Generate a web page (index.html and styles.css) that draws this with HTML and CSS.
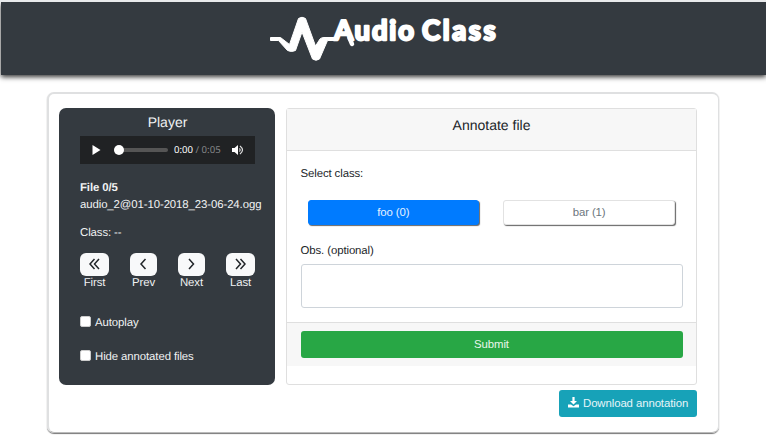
FILE: index.html
```html
<!DOCTYPE html>
<html lang="en">
<head>
<meta charset="utf-8">
<title>Audio Class</title>
<link rel="stylesheet" href="styles.css">
</head>
<body>
<header class="top">
  <svg class="logo" width="240" height="60" viewBox="265 8 240 60" role="img" aria-label="Audio Class">
    <path class="wave" d="M270.500 37.500H280.500L289.500 44.500L298.500 18.500Q302 16 305.500 18.500L315.500 46L320 39Q321.500 37.500 324 37.500H336V40.500H327.500L319.500 59Q316 61.500 312.500 59L302 32L295.500 50.500Q291.500 52.500 287.500 50.500L278.500 40.500H270.500Z"/>
    <path class="tail" d="M349.500 38L352 44"/>
    <text class="name" x="334" y="39.500" textLength="80" lengthAdjust="spacing">Audio</text>
    <text class="name" x="422" y="39.500" textLength="73.500" lengthAdjust="spacing">Class</text>
  </svg>
</header>
<main class="panel">
  <section class="player">
    <h1>Player</h1>
    <div class="audio">
      <svg class="play" width="9" height="10" viewBox="0 0 9 10"><path d="M.5 0L8.500 5L.5 10Z"/></svg>
      <div class="track"><span class="knob"></span></div>
      <div class="time"><b>0:00</b> / 0:05</div>
      <svg class="volume" width="12" height="10" viewBox="0 0 12 10"><path d="M0 3H2.500L6 0V10L2.500 7H0Z"/><path class="sound" d="M7.500 3.300Q9 5 7.500 6.700M8 1Q13 5 8 9"/></svg>
    </div>
    <div class="file"><strong>File 0/5</strong><br>audio_2@01-10-2018_23-06-24.ogg</div>
    <div class="class">Class: --</div>
    <nav class="steps">
      <div class="step"><button class="wide"><svg width="11" height="12" viewBox="0 0 11 12"><path d="M5.500 1L1 6L5.500 11M10 1L5.500 6L10 11"/></svg></button>First</div>
      <div class="step"><button><svg width="11" height="12" viewBox="0 0 11 12"><path d="M7.500 1L3 6L7.500 11"/></svg></button>Prev</div>
      <div class="step"><button><svg width="11" height="12" viewBox="0 0 11 12"><path d="M3 1L7.500 6L3 11"/></svg></button>Next</div>
      <div class="step"><button class="wide"><svg width="11" height="12" viewBox="0 0 11 12"><path d="M1 1L5.500 6L1 11M5.500 1L10 6L5.500 11"/></svg></button>Last</div>
    </nav>
    <label class="check"><input type="checkbox"><span>Autoplay</span></label>
    <label class="check"><input type="checkbox"><span>Hide annotated files</span></label>
  </section>
  <div class="side">
    <section class="card">
      <h2>Annotate file</h2>
      <div class="body">
        <div class="label">Select class:</div>
        <div class="choices"><button class="choice active">foo (0)</button><button class="choice">bar (1)</button></div>
        <label class="label" for="obs">Obs. (optional)</label>
        <textarea id="obs"></textarea>
      </div>
      <footer><button class="submit">Submit</button></footer>
    </section>
    <button class="download"><svg width="11" height="11" viewBox="0 0 11 11"><path d="M4.400 0H6.600V4H9L5.500 7.500L2 4H4.400ZM0 7.500H3L5.500 9.300L8 7.500H11V10.500H0Z"/></svg>Download annotation</button>
  </div>
</main>
</body>
</html>
```
FILE: styles.css
```css
* { box-sizing: border-box; }
body {
  margin: 0;
  height: 437px;
  overflow: hidden;
  background: #fff;
  border-top: 2px solid #e8eaec;
  color: #212529;
  font: 11.4px/17px "Liberation Sans", Arial, sans-serif;
  letter-spacing: -.1px;
  text-rendering: geometricPrecision;
}
button { font: inherit; letter-spacing: inherit; padding: 0; border: 0; display: block; }
h1, h2 { margin: 0; font-size: 14px; font-weight: 400; letter-spacing: 0; text-align: center; }
.top {
  height: 73px;
  margin-left: 1px;
  padding: 6px 0 0 264px;
  background: #343a40;
  box-shadow: 0 2px 5px rgba(0, 0, 0, .8);
}
.logo { display: block; letter-spacing: 0; }
.wave { fill: #fff; stroke: #fff; stroke-width: 1px; stroke-linejoin: round; }
.tail { fill: none; stroke: #fff; stroke-width: 4.5px; stroke-linecap: round; }
.name {
  fill: #fff;
  stroke: #fff;
  stroke-width: 2.4px;
  stroke-linejoin: round;
  font: 700 27.5px Lato, sans-serif;
}
.panel {
  display: flex;
  gap: 11px;
  width: 672px;
  height: 341px;
  margin: 17px 0 0 47px;
  padding: 14px 0 0 10px;
  border: 2px solid #dfe0e1;
  border-right-width: 1px;
  border-bottom: 1px solid #bbb;
  border-radius: 7px;
  box-shadow: 0 1px 1px #777;
}
.player {
  width: 216px;
  height: 277px;
  padding: 5px 20px 0 21px;
  border-radius: 7px;
  background: #343a40;
  color: #f1f2f3;
}
.player h1 { line-height: 18px; }
.audio {
  display: flex;
  align-items: center;
  width: 175px;
  height: 28px;
  margin-top: 5px;
  padding-left: 12px;
  background: #202224;
}
.play, .volume { fill: #fff; flex: none; }
.track { width: 54px; height: 4px; margin-left: 13px; border-radius: 2px; background: #555; display: flex; align-items: center; flex: none; }
.knob { width: 10px; height: 10px; border-radius: 50%; background: #fff; flex: none; }
.time { width: 51px; margin-left: 6px; color: #858789; font: 9.6px/14px "Noto Sans", sans-serif; letter-spacing: 0; white-space: nowrap; flex: none; }
.time b { color: #fff; font-weight: 400; }
.volume { margin-left: 7px; }
.sound { fill: none; stroke: #ddd; stroke-width: 1.2px; }
.file { margin-top: 16px; white-space: nowrap; }
.class { margin-top: 11px; }
.steps { display: flex; justify-content: space-between; margin-top: 11px; width: 175px; }
.step { text-align: center; line-height: 15px; }
.step button {
  display: flex;
  align-items: center;
  justify-content: center;
  width: 27px;
  height: 23px;
  padding-bottom: 1px;
  border-radius: 6px;
  background: #f8f9fa;
}
.step .wide { width: 29px; }
.step svg { fill: none; stroke: #212529; stroke-width: 1.5px; }
.check { display: flex; height: 17px; margin-top: 24px; }
.check + .check { margin-top: 17px; }
.check input { appearance: none; width: 11px; height: 11px; margin: 1px 4px 0 0; border: 1px solid #ccc; border-radius: 2px; background: #fff; }
.side { width: 411px; }
.card { height: 277px; border: 1px solid #dfdfdf; border-radius: 3px; }
.card h2 { height: 42px; padding-top: 8px; line-height: 17px; background: #f7f7f7; border-bottom: 1px solid #dfdfdf; }
.body { height: 171px; padding: 15px 14px 14px 13.5px; }
.label { display: block; height: 17px; }
.choices { display: flex; gap: 24px; margin: 17px 7px 18px; }
.choice {
  width: 172px;
  height: 25px;
  border: 1px solid #e2e2e2;
  border-radius: 3px;
  background: #fff;
  color: #6c757d;
  box-shadow: 1px 1px 1px #666;
}
.choice.active { border-color: #007bff; background: #007bff; color: #e5f1ff; }
textarea { display: block; width: 382px; height: 44px; margin-top: 4px; resize: none; border: 1px solid #ced4da; border-radius: 3px; }
.card footer { height: 44px; padding: 8px 14px 8px 13.5px; border-top: 1px solid #dfdfdf; background: #f7f7f7; }
.submit { width: 382px; height: 27px; border-radius: 3px; background: #28a745; color: #e9f6ec; }
.download {
  display: flex;
  align-items: center;
  gap: 4px;
  width: 138px;
  height: 27px;
  margin: 5px 0 0 auto;
  padding-left: 9px;
  border-radius: 3px;
  background: #17a2b8;
  color: #e7f5f8;
  white-space: nowrap;
}
.download svg { fill: #fff; margin-top: -2px; }
```
